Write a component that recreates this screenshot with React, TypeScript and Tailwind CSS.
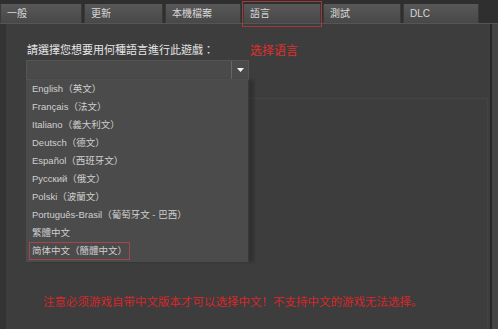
import React from "react";

const tabs = [
  { label: "一般", w: 82 },
  { label: "更新", w: 79 },
  { label: "本機檔案", w: 76 },
  { label: "語言", w: 78, active: true },
  { label: "測試", w: 78 },
  { label: "DLC", w: 76 },
];

const languages = [
  "English（英文）",
  "Français（法文）",
  "Italiano（義大利文）",
  "Deutsch（德文）",
  "Español（西班牙文）",
  "Русский（俄文）",
  "Polski（波蘭文）",
  "Português-Brasil（葡萄牙文 - 巴西）",
  "繁體中文",
  "简体中文（簡體中文）",
];

const font = {
  fontFamily:
    '"Liberation Sans", "Noto Sans CJK TC", "Noto Sans CJK SC", sans-serif',
};

const App = () => {
  return (
    <div
      className="w-[498px] h-[329px] bg-[#2f2f2f] flex flex-col overflow-hidden"
      style={font}
    >
      {/* tab strip */}
      <div className="h-[24px] pt-[4px] flex gap-[2px] border-b border-[#555]">
        {tabs.map((t) => (
          <div
            key={t.label}
            className="relative h-[19px] flex items-center pl-[6px] text-[10px] text-[#d8d8d8] bg-gradient-to-b from-[#585858] to-[#484848] border-x border-[#3a3a3a]"
            style={{ width: t.w }}
          >
            {t.label}
            {t.active && (
              <div className="absolute left-[-2px] right-[-2px] top-[-3px] bottom-[-4px] border border-[#a13a3c]" />
            )}
          </div>
        ))}
      </div>

      {/* body */}
      <div className="flex-1 flex">
        <div className="w-[6px] bg-[#333]" />
        <div className="flex-1 bg-[#3d3d3d] flex flex-col">
          <div className="flex items-center pl-[21px] pt-[18px] h-[34px]">
            <span className="w-[223px] text-[11px] text-[#e6e6e6]">
              請選擇您想要用何種語言進行此遊戲：
            </span>
            <span
              className="text-[12px] text-[#e0302b]"
              style={{ fontFamily: '"Noto Sans CJK SC", sans-serif' }}
            >
              选择语言
            </span>
          </div>

          {/* dropdown */}
          <div className="relative ml-[20px] mt-[2px] w-[223px] h-[20px] bg-[#4a4a4a] border border-[#555] flex justify-end z-10">
            <div className="w-[17px] h-full border-l border-[#666] flex items-center justify-center">
              <svg width="7" height="4" viewBox="0 0 7 4">
                <path d="M0 0 L7 0 L3.5 4 Z" fill="#f2f2f2" />
              </svg>
            </div>
            <div className="absolute left-[-1px] top-[19px] w-[223px] pb-[2px] bg-[#4b4b4b] border-r border-[#3a3a3a] shadow-[5px_0_3px_rgba(0,0,0,0.2)]">
              {languages.map((l, i) => (
                <div key={l} className="h-[18px] flex items-center pl-[3px]">
                  <span
                    className={`px-[2px] text-[9.5px] text-[#cfcfcf] leading-[16px] ${
                      i === languages.length - 1
                        ? "border border-[#a4464c]"
                        : "border border-transparent"
                    }`}
                  >
                    {l}
                  </span>
                </div>
              ))}
            </div>
          </div>

          {/* panel behind the list */}
          <div className="flex-1 ml-[20px] mr-[2px] mt-[18px] border-t border-r border-[#444]">
            <div
              className="mt-[194px] pl-[17px] text-[11.5px] text-[#d8262a]"
              style={{ fontFamily: '"Noto Sans CJK SC", sans-serif' }}
            >
              注意必须游戏自带中文版本才可以选择中文！不支持中文的游戏无法选择。
            </div>
          </div>
        </div>
        <div className="w-[2px] bg-[#262626]" />
        <div className="w-[6px] bg-[#444]" />
      </div>
    </div>
  );
};

export default App;
